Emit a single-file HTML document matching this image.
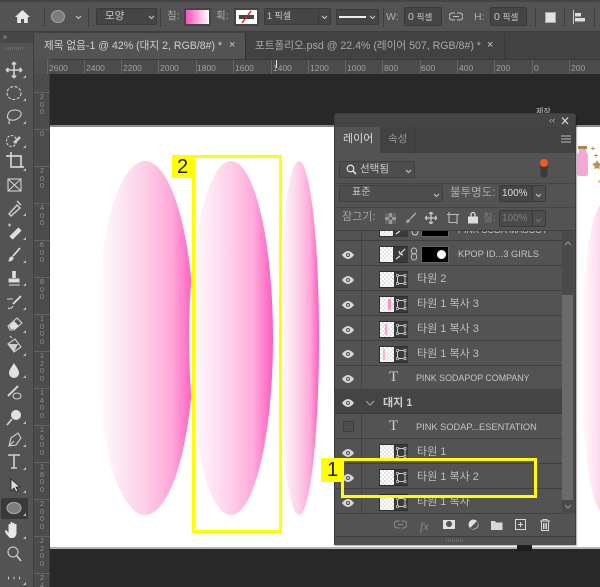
<!DOCTYPE html>
<html lang="ko"><head><meta charset="utf-8"><style>
html,body{margin:0;padding:0;background:#282828}
#r{position:relative;width:600px;height:587px;overflow:hidden;background:#282828;font-family:"Liberation Sans","Noto Sans CJK KR",sans-serif;color:#c8c8c8;filter:blur(.3px)}
#r div,#r svg,#r span{position:absolute;box-sizing:border-box}
.t{white-space:nowrap;line-height:1}
.f{background:#454545;border:1px solid #3a3a3a;border-radius:2px}
.hr{font-size:8.5px;color:#a0a0a0;top:63px}
.vr{font-size:7.5px;color:#8e8e8e;left:38px;width:8px;line-height:7.5px;text-align:center}
.row{left:0;width:227px;background:#535353;border-bottom:1px solid #3f3f3f}
.ln{left:0;top:0;width:27px;height:100%;border-right:1px solid #444}
.lab{font-size:11px;color:#bdbdbd;white-space:nowrap;line-height:1}
.en{font-size:9px;color:#c4c4c4}
.th{width:29px;height:17px;background:repeating-conic-gradient(#e4e4e4 0 25%,#fff 0 50%) 0 0/4px 4px;border:1px solid #2f2f2f}
</style></head><body><div id="r">

<!-- options bar -->
<div style="left:0;top:0;width:600px;height:32px;background:#535353;border-bottom:1px solid #3d3d3d;border-top:2px solid #454545"></div>
<svg style="left:14px;top:9px" width="17" height="15" viewBox="0 0 17 15"><path d="M8.500 1 1 8h2.200v6h3.800v-4h3v4h3.800V8H16z" fill="#e6e6e6"/></svg>
<div style="left:44px;top:7px;width:1px;height:20px;background:#3f3f3f"></div>
<div style="left:51px;top:10px;width:14px;height:13px;border-radius:50%;background:#7d7d7d;border:1px solid #a5a5a5"></div>
<svg style="left:75px;top:15px" width="7" height="5" viewBox="0 0 7 5"><path d="M1 1l2.500 2.500L6 1" fill="none" stroke="#c8c8c8" stroke-width="1.100"/></svg>
<div style="left:88px;top:7px;width:1px;height:20px;background:#3f3f3f"></div>
<div class="f" style="left:96px;top:8px;width:61px;height:17px"></div>
<div class="t" style="left:105px;top:11px;font-size:10.500px">모양</div>
<svg style="left:148px;top:15px" width="7" height="5" viewBox="0 0 7 5"><path d="M1 1l2.500 2.500L6 1" fill="none" stroke="#c8c8c8" stroke-width="1.100"/></svg>
<div style="left:160px;top:7px;width:1px;height:20px;background:#3f3f3f"></div>
<div class="t" style="left:167px;top:11px;font-size:10.500px;color:#aaa">칠:</div>
<div style="left:184px;top:8px;width:27px;height:18px;border:2px solid #444;background:linear-gradient(90deg,#ff4fb8,#fff)"></div>
<div class="t" style="left:216px;top:11px;font-size:10.500px;color:#aaa">획:</div>
<div style="left:234px;top:8px;width:25px;height:18px;border:2px solid #444;background:#fff"></div>
<svg style="left:236px;top:10px" width="21" height="14" viewBox="0 0 21 14"><rect x="3" y="5" width="15" height="4" fill="#444"/><path d="M6 13 15 1" stroke="#e01818" stroke-width="1.400"/></svg>
<div class="f" style="left:264px;top:8px;width:66px;height:17px"></div>
<div class="t" style="left:267px;top:12px;font-size:9px">1 픽셀</div>
<div class="f" style="left:318px;top:8px;width:13px;height:17px"></div>
<svg style="left:321px;top:15px" width="7" height="5" viewBox="0 0 7 5"><path d="M1 1l2.500 2.500L6 1" fill="none" stroke="#c8c8c8" stroke-width="1.100"/></svg>
<div class="f" style="left:336px;top:9px;width:43px;height:16px"></div>
<div style="left:339px;top:16px;width:27px;height:2px;background:#eee"></div>
<svg style="left:369px;top:15px" width="7" height="5" viewBox="0 0 7 5"><path d="M1 1l2.500 2.500L6 1" fill="none" stroke="#c8c8c8" stroke-width="1.100"/></svg>
<div style="left:383px;top:7px;width:1px;height:20px;background:#3f3f3f"></div>
<div class="t" style="left:386px;top:12px;font-size:10.500px;color:#aaa">W:</div>
<div class="f" style="left:404px;top:7px;width:38px;height:19px"></div>
<div class="t" style="left:408px;top:12px;font-size:10px"><span style="position:static;font-size:10.500px">0</span> <span style="position:static;font-size:8.500px">픽셀</span></div>
<svg style="left:449px;top:12px" width="14" height="9" viewBox="0 0 14 9"><path d="M6 1H3.500a3.400 3.400 0 0 0 0 7H6M8 1h2.500a3.400 3.400 0 0 1 0 7H8M4 4.500h6" fill="none" stroke="#bdbdbd" stroke-width="1.100"/></svg>
<div class="t" style="left:474px;top:12px;font-size:10.500px;color:#aaa">H:</div>
<div class="f" style="left:490px;top:7px;width:37px;height:19px"></div>
<div class="t" style="left:494px;top:12px;font-size:10px"><span style="position:static;font-size:10.500px">0</span> <span style="position:static;font-size:8.500px">픽셀</span></div>
<div style="left:535px;top:7px;width:1px;height:20px;background:#3f3f3f"></div>
<div style="left:546px;top:13px;width:9px;height:9px;background:#e2e2e2"></div>
<div style="left:545px;top:12px;width:11px;height:11px;border:1px solid #aaa"></div>
<div style="left:564px;top:7px;width:1px;height:20px;background:#3f3f3f"></div>
<svg style="left:573px;top:10px" width="15" height="15" viewBox="0 0 15 15"><path d="M.5 0v14" stroke="#ccc"/><rect x="2" y="3" width="6" height="3.500" fill="#ddd"/><rect x="2" y="8" width="10" height="3.500" fill="#ddd"/></svg>
<div style="left:594px;top:7px;width:1px;height:20px;background:#3f3f3f"></div>

<!-- tabs -->
<div style="left:0;top:32px;width:600px;height:27px;background:#424242"></div>
<div style="left:34px;top:33px;width:211px;height:26px;background:#535353"></div>
<div class="t" style="left:44px;top:41px;font-size:10.600px;color:#cfcfcf">제목 없음-1 @ 42% (대지 2, RGB/8#) *</div>
<div class="t" style="left:229px;top:40px;font-size:11px;color:#c8c8c8">×</div>
<div style="left:245px;top:33px;width:1px;height:26px;background:#333"></div>
<div class="t" style="left:255px;top:41px;font-size:10.600px;color:#a8a8a8">포트폴리오.psd @ 22.4% (레이어 507, RGB/8#) *</div>
<div class="t" style="left:487px;top:40px;font-size:11px;color:#c8c8c8">×</div>
<div style="left:504px;top:33px;width:1px;height:26px;background:#383838"></div>

<!-- rulers -->
<div style="left:34px;top:59px;width:566px;height:15px;background:#4b4b4b;border-top:1px solid #3a3a3a"></div>
<div style="left:34px;top:59px;width:16px;height:15px;background:#505050"></div>
<div style="left:34px;top:74px;width:16px;height:513px;background:#4b4b4b;border-right:1px solid #3e3e3e"></div>
<div style="left:276px;top:60px;width:1px;height:8px;background:#ddd"></div>
<div class="hr" style="left:49px">2600</div><div class="hr" style="left:86px">2400</div><div class="hr" style="left:123px">2200</div><div class="hr" style="left:160px">2000</div><div class="hr" style="left:197px">1800</div><div class="hr" style="left:235px">1600</div><div class="hr" style="left:273px">1400</div><div class="hr" style="left:310px">1200</div><div class="hr" style="left:347px">1000</div><div class="hr" style="left:384px">800</div><div class="hr" style="left:421px">600</div><div class="hr" style="left:459px">400</div><div class="hr" style="left:496px">200</div><div class="hr" style="left:534px">0</div><div class="hr" style="left:571px">200</div>
<svg style="left:0;top:59px" width="600" height="15"><path d="M47.500 1v14M84.500 1v14M121.500 1v14M158.500 1v14M196.500 1v14M233.500 1v14M271.500 1v14M308.500 1v14M345.500 1v14M382.500 1v14M420.500 1v14M457.500 1v14M494.500 1v14M532.500 1v14M569.500 1v14" stroke="#666"/></svg>
<svg style="left:34px;top:0" width="16" height="587"><path d="M0 129.500h16M0 166.500h16M0 203.500h16M0 240.500h16M0 277.500h16M0 314.500h16M0 351.500h16M0 388.500h16M0 425.500h16M0 462.500h16M0 499.500h16M0 536.500h16M0 573.500h16M0 92.500h16" stroke="#626262"/></svg>
<div class="vr" style="top:93px">2<br>0<br>0</div>
<div class="vr" style="top:130px">0</div>
<div class="vr" style="top:167px">2<br>0<br>0</div>
<div class="vr" style="top:204px">4<br>0<br>0</div>
<div class="vr" style="top:241px">6<br>0<br>0</div>
<div class="vr" style="top:278px">8<br>0<br>0</div>
<div class="vr" style="top:315px">1<br>0<br>0<br>0</div>
<div class="vr" style="top:352px">1<br>2<br>0<br>0</div>
<div class="vr" style="top:389px">1<br>4<br>0<br>0</div>
<div class="vr" style="top:426px">1<br>6<br>0<br>0</div>
<div class="vr" style="top:463px">1<br>8<br>0<br>0</div>
<div class="vr" style="top:500px">2<br>0<br>0<br>0</div>
<div class="vr" style="top:537px">2<br>2<br>0<br>0</div>
<div class="vr" style="top:574px">2<br>4</div>

<!-- canvas -->
<div style="left:50px;top:125px;width:550px;height:424px;background:#fff;border-top:2px solid #8a8a8a;border-bottom:2px solid #b5b5b5"></div>
<svg style="left:50px;top:127px" width="550" height="420" viewBox="50 127 550 420">
<defs><linearGradient id="g"><stop offset="0" stop-color="#fff"/><stop offset=".5" stop-color="#fdcfe8"/><stop offset=".78" stop-color="#ffa6d9"/><stop offset="1" stop-color="#ff5cc0"/></linearGradient></defs>
<ellipse cx="145" cy="338" rx="49" ry="177" fill="url(#g)"/>
<ellipse cx="231" cy="338" rx="42" ry="177" fill="url(#g)"/>
<ellipse cx="299" cy="338" rx="20" ry="177" fill="url(#g)"/>
<ellipse cx="604" cy="358" rx="23" ry="155" fill="url(#g)"/>
<path d="M579 149h7v3c2 2 2 3 2 5v17c0 1-1 2-2 2h-7c-1 0-2-1-2-2v-17c0-2 0-3 2-5z" fill="#f3a9d6"/><rect x="578" y="146" width="9" height="3" fill="#a98850"/>
<path d="M593 146.500v4M591 148.500h4M596 153.500v4M594 155.500h4M597 161l1.500 2.500 2.500.5-2 2v2.500l-2-1-2 1v-2.500l-2-2 2.500-.5zM599 180v3" stroke="#b8935a" fill="#b8935a" stroke-width=".9"/>
</svg>
<div class="t" style="left:536px;top:108px;font-size:8px;color:#ccc">제작</div>

<!-- toolbar -->
<div style="left:0;top:32px;width:34px;height:555px;background:#535353;border-right:1px solid #3e3e3e"></div>
<div style="left:0;top:32px;width:33px;height:11px;background:#474747"></div>
<div class="t" style="left:3px;top:34px;font-size:7px;color:#bbb">»</div>
<div style="left:6px;top:47px;width:17px;height:3px;background:repeating-linear-gradient(90deg,#6d6d6d 0 1px,transparent 1px 2px)"></div>
<div style="left:1px;top:498px;width:27px;height:21px;background:#3a3a3a;border-radius:2px"></div>
<svg style="left:0;top:55px" width="34" height="532" viewBox="0 55 34 532" fill="none" stroke="#d0d0d0" stroke-width="1.100">
<path d="M14 63v14M7 70h14M14 62l-2 2.500M14 62l2 2.500M14 78l-2-2.500M14 78l2-2.500M6 70l2.500-2M6 70l2.500 2M22 70l-2.500-2M22 70l-2.500 2" stroke-width="1.600"/>
<ellipse cx="14" cy="93" rx="7" ry="6.500" stroke-dasharray="3 1.600"/>
<path d="M15 110c4 0 7 2 6 5s-6 6-10 5-4-3-3-6 4-4 7-4zM10 120c-1 1-2 3 0 4"/>
<ellipse cx="11.500" cy="141" rx="5" ry="5.500" stroke-dasharray="2.500 1.500"/>
<path d="M14 143l6-6" stroke-width="2.600"/>
<path d="M6 156h15v11M11 152v15h13" stroke-width="1.700"/>
<rect x="8" y="179" width="13" height="12"/><path d="M8 179l13 12M21 179L8 191"/>
<path d="M9 214l8-9 3 3-9 8zM17 201l4 4" stroke-width="1.400"/>
<path d="M11 238l9-9" stroke="#dedede" stroke-width="4.500"/><path d="M8 225h3M9.500 223.500v3"/>
<path d="M20 248l-7 8" stroke="#e2e2e2" stroke-width="1.700"/><path d="M10 258c2-2 3-1 3 0s-1 3-4 3z" fill="#e2e2e2"/>
<path d="M14 271v7" stroke="#e2e2e2" stroke-width="3.600"/><rect x="9" y="279" width="10" height="3" fill="#e2e2e2"/><path d="M9 285h11"/>
<path d="M21 296l-8 8" stroke="#e2e2e2" stroke-width="1.700"/><path d="M7 299h6M8 308c2 1 4 0 5-2"/>
<path d="M8 326l9-8 5 5-8 7H10z"/><path d="M14 321l5 5-4 3h-4l-2-3z" fill="#dedede" stroke="none"/>
<path d="M8 344l7-5 6 8-7 5zM12 338l-2-2"/><path d="M8 344h10l-4 8z" fill="#cfcfcf" stroke="none"/>
<path d="M14 363c-3 5-5 7-5 10a5 5 0 0 0 10 0c0-3-2-5-5-10z" fill="#e2e2e2" stroke="none"/>
<path d="M8 396l10-10" stroke-width="2"/><ellipse cx="17" cy="396" rx="4" ry="3"/>
<circle cx="16" cy="415" r="5" fill="#e2e2e2" stroke="none"/><path d="M12 419l-5 6" stroke-width="1.700"/>
<path d="M9 446l2-8 7-5 3 5-5 7zM9 446l5-5"/>
<path d="M9 456v-1h10v1M14 455v13M11 468h6" stroke-width="1.600"/>
<path d="M11 479v12l3-3 2 4 2-1-2-4h4z" fill="#dedede" stroke="#222" stroke-width=".8"/>
<ellipse cx="14" cy="508" rx="7" ry="5.500" fill="#7e7e7e" stroke="#aaa"/>
<path d="M10 538c-2-2-5-5-5-7 0-1 1.500-1 2 0l1.500 2v-8c0-1.500 2-1.500 2 0v4-6c0-1.500 2-1.500 2 0v6-5c0-1.500 2-1.500 2 0v5-4c0-1.500 2-1.500 2 0v8c0 3-2 5-4 5z" fill="#e8e8e8" stroke="none"/>
<circle cx="13" cy="552" r="5"/><path d="M17 556l4 5" stroke-width="1.600"/>
<path d="M8 578h1M13.500 578h1M19 578h1" stroke-width="2.600"/>
</svg>
<svg style="left:0;top:55px" width="34" height="532" viewBox="0 55 34 532" fill="#bdbdbd">
<path d="M26 78v-3l-3 3zM26 101v-3l-3 3zM26 124v-3l-3 3zM26 148v-3l-3 3zM26 171v-3l-3 3zM26 216v-3l-3 3zM26 240v-3l-3 3zM26 263v-3l-3 3zM26 286v-3l-3 3zM26 310v-3l-3 3zM26 333v-3l-3 3zM26 356v-3l-3 3zM26 378v-3l-3 3zM26 424v-3l-3 3zM26 447v-3l-3 3zM26 470v-3l-3 3zM26 493v-3l-3 3zM26 516v-3l-3 3zM26 539v-3l-3 3zM26 585v-3l-3 3z"/>
</svg>

<!-- panel -->
<div style="left:334px;top:113px;width:242px;height:432px;background:#535353;border:1px solid #3d3d3d;border-radius:3px 3px 0 0;box-shadow:1px 1px 1px rgba(0,0,0,.3)">
 <div style="left:0;top:0;width:240px;height:13px;background:#454545"></div>
 <div class="t" style="left:214px;top:2px;font-size:9px;color:#bbb">‹‹</div>
 <svg style="left:226px;top:3px" width="9" height="8"><path d="M1 .5l6 6.500M7 .5L1 7" stroke="#ddd" stroke-width="1.200"/></svg>
 <div style="left:0;top:13px;width:240px;height:26px;background:#424242"></div>
 <div style="left:0;top:13px;width:45px;height:26px;background:#535353"></div>
 <div class="t" style="left:8px;top:20px;font-size:11px;color:#d8d8d8">레이어</div>
 <div class="t" style="left:53px;top:20px;font-size:10.500px;color:#999">속성</div>
 <div style="left:79px;top:13px;width:1px;height:26px;background:#383838"></div>
 <svg style="left:226px;top:21px" width="10" height="9"><path d="M0 1h10M0 4h10M0 7h10" stroke="#bbb"/></svg>

 <div class="f" style="left:4px;top:47px;width:76px;height:17px;border-color:#404040;background:#4d4d4d"></div>
 <svg style="left:11px;top:50px" width="11" height="11"><circle cx="4.500" cy="4.500" r="3.300" fill="none" stroke="#ddd" stroke-width="1.300"/><path d="M7 7l3 3" stroke="#ddd" stroke-width="1.600"/></svg>
 <div class="t" style="left:25px;top:50px;font-size:10.500px">선택됨</div>
 <svg style="left:70px;top:55px" width="7" height="5"><path d="M1 1l2.500 2.500L6 1" fill="none" stroke="#c8c8c8" stroke-width="1.100"/></svg>
 <div style="left:205px;top:48px;width:8px;height:16px;background:#3a3a3a;border-radius:4px;border:1px solid #444"></div>
 <div style="left:205px;top:45px;width:8px;height:8px;background:#f15a24;border-radius:50%"></div>
 <div style="left:0;top:69px;width:240px;height:1px;background:#454545"></div>

 <div class="f" style="left:4px;top:71px;width:104px;height:17px;border-color:#404040;background:#4d4d4d"></div>
 <div class="t" style="left:17px;top:74px;font-size:10px">표준</div>
 <svg style="left:98px;top:79px" width="7" height="5"><path d="M1 1l2.500 2.500L6 1" fill="none" stroke="#c8c8c8" stroke-width="1.100"/></svg>
 <div class="t" style="left:115px;top:74px;font-size:11.500px;color:#aaa">불투명도:</div>
 <div class="f" style="left:164px;top:71px;width:34px;height:17px"></div>
 <div class="t" style="left:167px;top:75px;font-size:10px;color:#ddd">100%</div>
 <div class="f" style="left:197px;top:71px;width:14px;height:17px;background:#4d4d4d"></div>
 <svg style="left:200px;top:79px" width="7" height="5"><path d="M1 1l2.500 2.500L6 1" fill="none" stroke="#c8c8c8" stroke-width="1.100"/></svg>
 <div style="left:0;top:93px;width:240px;height:1px;background:#454545"></div>

 <div class="t" style="left:7px;top:98px;font-size:11px;color:#a4a4a4">잠그기:</div>
 <svg style="left:50px;top:99px" width="11" height="11"><rect width="11" height="11" fill="#999"/><path d="M0 0h4v4H0zM7 0h4v4H7zM4 4h3v3H4zM0 7h4v4H0zM7 7h4v4H7z" fill="#666"/></svg>
 <svg style="left:70px;top:98px" width="12" height="12"><path d="M11 1L5 7" stroke="#aaa" stroke-width="1.500"/><path d="M1 11c0-3 2-4 3-4l1 1c0 2-2 3-4 3z" fill="#aaa"/></svg>
 <svg style="left:90px;top:98px" width="12" height="12"><path d="M6 0v12M0 6h12M6 0L4 2M6 0l2 2M6 12l-2-2M6 12l2-2M0 6l2-2M0 6l2 2M12 6l-2-2M12 6l-2 2" stroke="#ccc" stroke-width="1.200" fill="none"/></svg>
 <svg style="left:112px;top:98px" width="13" height="12"><path d="M2 2.500h8v8H2zM0 2.500h2M10 2.500h2M2 0v2.500M10 9v3" stroke="#bbb" fill="none" stroke-width="1.100"/></svg>
 <svg style="left:133px;top:97px" width="10" height="13"><path d="M3 6V3.500a2 2 0 0 1 4 0V6" fill="none" stroke="#ddd" stroke-width="1.300"/><rect y="5.500" width="10" height="7" fill="#ddd"/></svg>
 <div class="t" style="left:148px;top:99px;font-size:10.500px;color:#7d7d7d">칠:</div>
 <div class="f" style="left:164px;top:96px;width:34px;height:17px;background:#4a4a4a"></div>
 <div class="t" style="left:167px;top:100px;font-size:10px;color:#7d7d7d">100%</div>
 <div class="f" style="left:197px;top:96px;width:14px;height:17px;background:#4d4d4d"></div>
 <svg style="left:200px;top:104px" width="7" height="5"><path d="M1 1l2.500 2.500L6 1" fill="none" stroke="#777" stroke-width="1.100"/></svg>

 <div style="left:0;top:116px;width:240px;height:1px;background:#3f3f3f"></div>
</div>

<!-- layers list -->
<div id="l" style="left:335px;top:231px;width:227px;height:283px;overflow:hidden;background:#535353">
 <svg style="left:0;top:0" width="0" height="0"><defs>
  <g id="s"><rect width="14" height="15" fill="#3a3a3a"/><rect x="3.500" y="3.500" width="7.500" height="8" rx="1" fill="none" stroke="#c8c8c8"/><path d="M2.500 2.500h2v2h-2zM10 2.500h2v2h-2zM2.500 10.500h2v2h-2zM10 10.500h2v2h-2z" fill="#3a3a3a" stroke="#d0d0d0" stroke-width=".7"/></g>
  <g id="e"><path d="M0 4C2 1 5 0 6 0s4 1 6 4c-2 3-5 4-6 4S2 7 0 4z" fill="#d8d8d8"/><circle cx="6" cy="4" r="2" fill="#535353"/><circle cx="6" cy="4" r="1" fill="#d8d8d8"/></g>
 </defs></svg>
 <div class="row" style="top:0;height:10px"><div class="ln"></div></div>
 <div class="th" style="left:44px;top:-11px"></div>
 <svg style="left:58px;top:-9px" width="15" height="15"><rect width="15" height="15" fill="#3a3a3a"/><path d="M3 12l4-3M7 7l5-5" stroke="#ddd" stroke-width="1.300"/></svg>
 <div style="left:86px;top:0;width:28px;height:6px;background:#000;border:1px solid #666;border-top:0"></div>
 <svg style="left:76px;top:0" width="8" height="5" fill="none"><path d="M1 0c0 3 1 4 3 4s3-1 3-4" stroke="#ccc"/></svg>
 <div class="en" style="position:absolute;left:123px;top:-5px;white-space:nowrap;line-height:1;font-size:9px">PINK SODA MASCOT</div>

 <div class="row" style="top:10px;height:25px"><div class="ln"></div></div>
 <div class="row" style="top:35px;height:25px"><div class="ln"></div></div>
 <div class="row" style="top:60px;height:25px"><div class="ln"></div></div>
 <div class="row" style="top:85px;height:25px"><div class="ln"></div></div>
 <div class="row" style="top:110px;height:25px"><div class="ln"></div></div>
 <div class="row" style="top:135px;height:24px"><div class="ln"></div></div>
 <div class="row" style="top:159px;height:24px;background:#444;border-bottom-color:#3a3a3a"></div>
 <div class="row" style="top:183px;height:25px"><div class="ln"></div></div>
 <div class="row" style="top:208px;height:25px"><div class="ln"></div></div>
 <div class="row" style="top:233px;height:25px"><div class="ln"></div></div>
 <div class="row" style="top:258px;height:25px"><div class="ln"></div></div>

 <!-- kpop -->
 <div class="th" style="left:44px;top:15px"></div>
 <svg style="left:58px;top:16px" width="15" height="15" fill="none"><rect width="15" height="15" fill="#3a3a3a"/><path d="M3 12l4-3M7 7l5-5M6 4l1 3 3 1" stroke="#ddd" stroke-width="1.200"/></svg>
 <svg style="left:75px;top:16px" width="8" height="14" fill="none" stroke="#c0c0c0"><rect x="1.500" y="1" width="5" height="6" rx="2.500"/><rect x="1.500" y="6.500" width="5" height="6.500" rx="2.500"/></svg>
 <div style="left:86px;top:15px;width:28px;height:17px;background:#000;border:1px solid #666"></div>
 <div style="left:102px;top:19px;width:9px;height:9px;background:#fff;border-radius:50%"></div>
 <div class="lab en" style="left:123px;top:19px;font-size:9.300px">KPOP ID...3 GIRLS</div>

 <div class="th" style="left:44px;top:40px"></div><svg style="left:59px;top:41px" width="14" height="15"><use href="#s"/></svg><div class="lab" style="left:82px;top:43px">타원 2</div>

 <div class="th" style="left:44px;top:65px"></div><svg style="left:59px;top:66px" width="14" height="15"><use href="#s"/></svg><div style="left:53px;top:68px;width:3px;height:11px;background:#ff8fd0"></div><div class="lab" style="left:82px;top:68px">타원 1 복사 3</div>

 <div class="th" style="left:44px;top:90px"></div><svg style="left:59px;top:91px" width="14" height="15"><use href="#s"/></svg><div style="left:50px;top:93px;width:2px;height:11px;background:#ff9fd5"></div><div class="lab" style="left:82px;top:93px">타원 1 복사 3</div>

 <div class="th" style="left:44px;top:115px"></div><svg style="left:59px;top:116px" width="14" height="15"><use href="#s"/></svg><div style="left:48px;top:118px;width:2px;height:11px;background:#ffb0dc"></div><div class="lab" style="left:82px;top:118px">타원 1 복사 3</div>

 <div style="left:54px;top:139px;font:15px/15px 'Liberation Serif',serif;color:#d0d0d0">T</div>
 <div class="lab en" style="left:81px;top:143px;font-size:8.900px">PINK SODAPOP COMPANY</div>

 <svg style="left:30px;top:169px" width="10" height="6" fill="none"><path d="M1 1l4 4 4-4" stroke="#aaa"/></svg>
 <div class="lab" style="left:48px;top:167px;font-weight:700;color:#d0d0d0">대지 1</div>

 <div style="left:8px;top:190px;width:11px;height:11px;border:1px solid #3e3e3e;background:#4d4d4d"></div>
 <div style="left:54px;top:188px;font:15px/15px 'Liberation Serif',serif;color:#d0d0d0">T</div>
 <div class="lab en" style="left:81px;top:192px;font-size:9.250px">PINK SODAP...ESENTATION</div>

 <div class="th" style="left:44px;top:213px"></div><svg style="left:59px;top:214px" width="14" height="15"><use href="#s"/></svg><div style="left:58px;top:214px;width:1px;height:6px;background:#ffb0dc"></div><div class="lab" style="left:82px;top:216px">타원 1</div>

 <div class="th" style="left:44px;top:238px"></div><svg style="left:59px;top:239px" width="14" height="15"><use href="#s"/></svg><div class="lab" style="left:82px;top:241px">타원 1 복사 2</div>

 <div class="th" style="left:44px;top:263px"></div><svg style="left:59px;top:264px" width="14" height="15"><use href="#s"/></svg><div class="lab" style="left:82px;top:266px">타원 1 복사</div>

 <!-- eyes -->
 <svg style="left:0;top:0" width="27" height="283">
  <use href="#e" x="7" y="20"/><use href="#e" x="7" y="45"/><use href="#e" x="7" y="70"/><use href="#e" x="7" y="95"/><use href="#e" x="7" y="119"/><use href="#e" x="7" y="144"/><use href="#e" x="7" y="168"/><use href="#e" x="7" y="218"/><use href="#e" x="7" y="243"/><use href="#e" x="7" y="268"/>
 </svg>
</div>

<!-- scrollbar -->
<div style="left:562px;top:231px;width:13px;height:283px;background:#4a4a4a"></div>
<div style="left:562px;top:295px;width:11px;height:205px;background:#6a6a6a"></div>
<svg style="left:564px;top:241px" width="8" height="5"><path d="M1 4l3-3 3 3" fill="none" stroke="#999"/></svg>
<svg style="left:564px;top:504px" width="8" height="5"><path d="M1 1l3 3 3-3" fill="none" stroke="#999"/></svg>

<!-- panel footer -->
<div style="left:335px;top:514px;width:240px;height:23px;background:#535353;border-bottom:1px solid #3a3a3a"></div>
<svg style="left:394px;top:520px" width="13" height="9"><path d="M5.500 1H3.500a3.300 3.300 0 0 0 0 7h2M7.500 1h2a3.300 3.300 0 0 1 0 7h-2M4 4.500h5" fill="none" stroke="#8d8d8d" stroke-width="1.100"/></svg>
<div class="t" style="left:420px;top:519px;font:italic 12px 'Liberation Serif',serif;color:#8d8d8d">fx</div>
<div style="left:443px;top:520px;width:12px;height:9px;background:#e0e0e0"></div><div style="left:446px;top:521px;width:6px;height:6px;background:#535353;border-radius:50%"></div>
<svg style="left:468px;top:519px" width="12" height="12"><circle cx="5.500" cy="5.500" r="5" fill="#e0e0e0"/><path d="M9 2L2 9a5 5 0 0 0 7-7z" fill="#535353"/></svg>
<svg style="left:491px;top:520px" width="12" height="10"><path d="M0 1h4l1 1.500h6.500V10H0z" fill="#d8d8d8"/></svg>
<svg style="left:515px;top:519px" width="11" height="11" fill="none" stroke="#d8d8d8"><rect x=".5" y=".5" width="10" height="10"/><path d="M5.500 3v5M3 5.500h5"/></svg>
<svg style="left:540px;top:519px" width="10" height="12" fill="none" stroke="#d8d8d8"><path d="M0 2h10M3 2V.5h4V2M1.500 2v9.500h7V2M3.500 4v6M5 4v6M6.500 4v6"/></svg>
<div style="left:335px;top:537px;width:240px;height:8px;background:#505050"></div>
<div style="left:446px;top:539px;width:18px;height:3px;background:repeating-linear-gradient(90deg,#6c6c6c 0 1px,transparent 1px 2px)"></div>
<div style="left:517px;top:545px;width:15px;height:6px;background:#1d1d1d"></div>

<!-- yellow annotations -->
<div style="left:192px;top:155px;width:90px;height:378px;border:3px solid #ffff00"></div>
<div style="left:172px;top:155px;width:22px;height:23px;background:#ffff00"></div>
<div class="t" style="left:177px;top:157px;font-size:20px;color:#222">2</div>
<div style="left:341px;top:458px;width:196px;height:40px;border:3px solid #ffff00"></div>
<div style="left:321px;top:458px;width:22px;height:24px;background:#ffff00"></div>
<div class="t" style="left:327px;top:460px;font-size:20px;color:#222">1</div>

</div></body></html>
